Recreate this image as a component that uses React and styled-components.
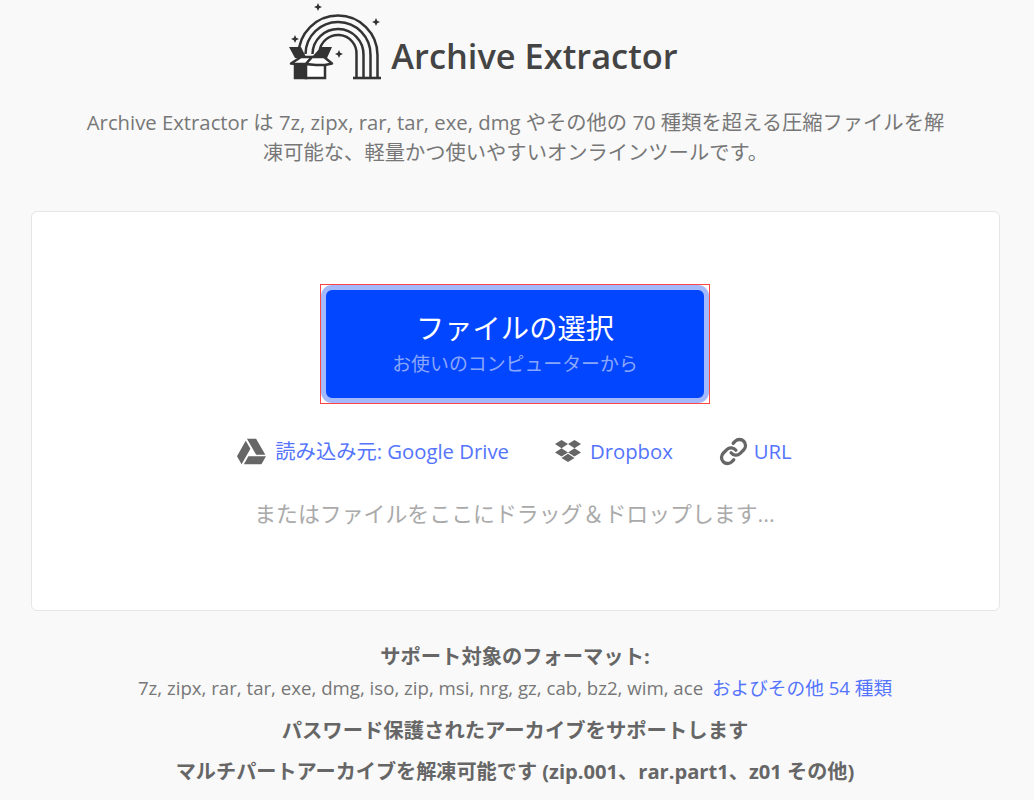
import React from "react";
import styled, { createGlobalStyle } from "styled-components";
import { FaGoogleDrive, FaDropbox } from "react-icons/fa";
import { Link } from "lucide-react";

const Global = createGlobalStyle`
  html, body { margin: 0; padding: 0; background: #f9f9f9; }
  body { font-family: "Open Sans", "Noto Sans CJK JP", sans-serif; color: #666; }
`;

const Page = styled.div`
  width: 1034px;
  height: 800px;
  overflow: hidden;
  display: flex;
  flex-direction: column;
  align-items: center;
`;

const Brand = styled.div`
  display: flex;
  align-items: flex-end;
  gap: 9px;
  height: 80px;
  margin-right: 68px;
`;

const BrandName = styled.div`
  font-size: 34.4px;
  line-height: 46px;
  font-weight: 600;
  color: #444;
  margin-bottom: 1px;
`;

const Tagline = styled.p`
  margin: 27px 0 0 -3px;
  width: 870px;
  text-align: center;
  font-size: 20.3px;
  line-height: 30px;
  color: #777;
`;

const Card = styled.section`
  box-sizing: border-box;
  width: 969px;
  height: 400px;
  margin: 44px 0 0 -3px;
  background: #fff;
  border: 1px solid #e6e6e6;
  border-radius: 6px;
  display: flex;
  flex-direction: column;
  align-items: center;
  padding-top: 72px;
`;

const Outline = styled.div`
  box-sizing: border-box;
  width: 390px;
  height: 120px;
  margin-right: 1px;
  border: 1px solid #f44;
`;

const PickButton = styled.button`
  box-sizing: border-box;
  width: 100%;
  height: 100%;
  border: 5px solid #a3b9fb;
  border-radius: 11px;
  background: #0246ff;
  display: flex;
  flex-direction: column;
  align-items: center;
  justify-content: center;
  font-family: inherit;
  padding: 0;
`;

const PickTitle = styled.span`
  font-size: 28.3px;
  line-height: 38px;
  color: #fff;
  margin-top: -2px;
`;

const PickSub = styled.span`
  font-size: 18.9px;
  line-height: 28px;
  margin-top: 3px;
  color: #8aa6fb;
`;

const Sources = styled.div`
  display: flex;
  align-items: center;
  gap: 46px;
  margin: 31px 2px 0 0;
`;

const Source = styled.a`
  display: flex;
  align-items: center;
  gap: ${(p) => p.$gap || 9}px;
  font-size: 20.3px;
  line-height: 32px;
  color: #5474fd;
  svg { color: #666; font-size: ${(p) => p.$icon || 29}px; }
`;

const DropHint = styled.div`
  margin: 32px 2px 0 0;
  font-size: 21.9px;
  line-height: 30px;
  color: #aaa;
`;

const Info = styled.div`
  display: flex;
  flex-direction: column;
  align-items: center;
  margin: 30px 0 0 -4px;
`;

const InfoHead = styled.div`
  font-size: ${(p) => p.$size || 20.3}px;
  line-height: 30px;
  font-weight: 700;
  color: #666;
  margin-top: ${(p) => p.$gap || 0}px;
`;

const Formats = styled.div`
  margin-top: 3px;
  font-size: 18.65px;
  line-height: 28px;
  color: #777;
  a { color: #5474fd; margin-left: 4px; }
`;

const Logo = () => (
  <svg width="94" height="80" viewBox="10 0 94 80" fill="none" stroke="#333" strokeWidth="2.5">
    <path d="M20.500 56V55A39.500 39.500 0 0 1 99.500 55V78" />
    <path d="M27.500 54A32.500 32.500 0 0 1 92.500 55V78" />
    <path d="M34.500 54A25.500 25.500 0 0 1 85.500 55V78" />
    <path d="M41.500 52A18.500 18.500 0 0 1 78.500 55V78" />
    <path d="M75 78H103" strokeWidth="2.6" />
    <path d="M40 3 41.200 5.800 44 7l-2.800 1.200L40 11l-1.200-2.800L36 7l2.800-1.200zM98 18l1.200 2.800 2.800 1.200-2.800 1.200L98 26l-1.200-2.800L94 22l2.800-1.200zM17 35l1.200 2.800 2.800 1.200-2.800 1.200L17 43l-1.200-2.800L13 39l2.800-1.200zM61 50l1.200 2.800 2.800 1.200-2.800 1.200L61 58l-1.200-2.800L57 54l2.800-1.200z" fill="#333" stroke="none" />
    <path d="M11 47H23L28 57 34 57 43 47H54L49 58H17Z" fill="#333" stroke="none" />
    <path d="M17 64H28V78H17Z" fill="#333" stroke="#333" />
    <path d="M28 64H47V78H28Z" fill="#fff" />
    <path d="M23 57H29L34 57 28 64 18 64 13 63.500Z" fill="#fff" strokeLinejoin="round" />
    <path d="M34 57H46L54 63.500 47 65H38L28 64Z" fill="#fff" strokeLinejoin="round" />
  </svg>
);

export default function App() {
  return (
    <Page>
      <Global />
      <Brand>
        <Logo />
        <BrandName>Archive Extractor</BrandName>
      </Brand>
      <Tagline>
        Archive Extractor は 7z, zipx, rar, tar, exe, dmg やその他の 70 種類を超える圧縮ファイルを解凍可能な、軽量かつ使いやすいオンラインツールです。
      </Tagline>
      <Card>
        <Outline>
          <PickButton>
            <PickTitle>ファイルの選択</PickTitle>
            <PickSub>お使いのコンピューターから</PickSub>
          </PickButton>
        </Outline>
        <Sources>
          <Source>
            <FaGoogleDrive />
            読み込み元: Google Drive
          </Source>
          <Source $icon={26}>
            <FaDropbox />
            Dropbox
          </Source>
          <Source $icon={29} $gap={6}>
            <Link size="1em" strokeWidth={2.7} />
            URL
          </Source>
        </Sources>
        <DropHint>またはファイルをここにドラッグ＆ドロップします...</DropHint>
      </Card>
      <Info>
        <InfoHead>サポート対象のフォーマット:</InfoHead>
        <Formats>
          7z, zipx, rar, tar, exe, dmg, iso, zip, msi, nrg, gz, cab, bz2, wim, ace
          <a> およびその他 54 種類</a>
        </Formats>
        <InfoHead $gap={13} $size={20.35}>パスワード保護されたアーカイブをサポートします</InfoHead>
        <InfoHead $gap={11} $size={20.15}>マルチパートアーカイブを解凍可能です (zip.001、rar.part1、z01 その他)</InfoHead>
      </Info>
    </Page>
  );
}
